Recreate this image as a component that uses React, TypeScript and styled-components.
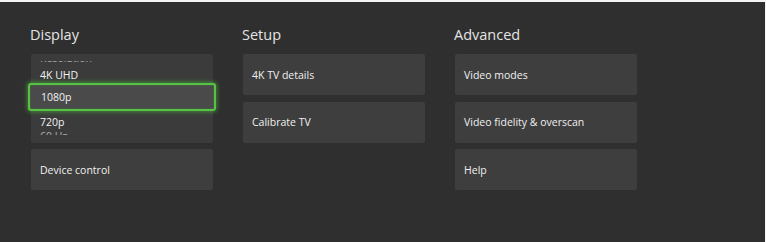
import React from 'react';
import styled, {createGlobalStyle} from 'styled-components';

const GlobalStyle = createGlobalStyle`
  html, body {
    margin: 0;
    padding: 0;
    background: #f4f4f4;
  }
  body {
    font-family: 'Open Sans', 'Noto Sans', sans-serif;
  }
`;

const columns = [
    {title: 'Display', items: ['Device control']},
    {title: 'Setup', items: ['4K TV details', 'Calibrate TV']},
    {title: 'Advanced', items: ['Video modes', 'Video fidelity & overscan', 'Help']},
];

const options = ['Resolution', '4K UHD', '1080p', '720p', '60 Hz'];

export default function App() {
    return (
        <>
            <GlobalStyle/>
            <Screen>
                {columns.map((col, i) => (
                    <Column key={col.title}>
                        <Heading>{col.title}</Heading>
                        {i === 0 && (
                            <Dropdown>
                                <OptionList>
                                    {options.map((o, idx) => (
                                        <Option
                                            key={o}
                                            $selected={o === '1080p'}
                                            $edge={idx === 0 ? 'top' : idx === options.length - 1 ? 'bottom' : undefined}
                                        >
                                            {o}
                                        </Option>
                                    ))}
                                </OptionList>
                            </Dropdown>
                        )}
                        {col.items.map(item => (
                            <Tile key={item}>{item}</Tile>
                        ))}
                    </Column>
                ))}
            </Screen>
        </>
    );
}

const Screen = styled.div`
  box-sizing: border-box;
  width: 765px;
  height: 240px;
  margin-top: 2px;
  background: #2f2f2f;
  padding: 21px 0 0 31px;
  display: grid;
  grid-template-columns: repeat(3, 182px);
  column-gap: 30px;
  align-items: start;
`;

const Column = styled.div`
  display: flex;
  flex-direction: column;
  gap: 6.5px;
`;

const Heading = styled.h2`
  margin: 0 0 0 -1px;
  height: 24.5px;
  font-size: 14.5px;
  font-weight: 400;
  line-height: 23px;
  color: #e4e4e4;
`;

const Tile = styled.div`
  box-sizing: border-box;
  height: 41px;
  padding: 0 9px;
  display: flex;
  align-items: center;
  background: #3e3e3e;
  border-radius: 2px;
  font-size: 10.5px;
  color: #f0f0f0;
`;

const Dropdown = styled.div`
  height: 88.5px;
  background: #3b3b3b;
  border-radius: 2px;
  position: relative;
`;

const OptionList = styled.div`
  display: flex;
  flex-direction: column;
  margin-top: -7.5px;
  clip-path: inset(14.5px -12px 10.5px -12px);
`;

const optionMargin = (p: { $selected?: boolean; $edge?: 'top' | 'bottom' }) => {
    if (p.$selected) return '-1.5px -3px 1.5px';
    if (p.$edge === 'top') return '2px 0 -2px';
    if (p.$edge === 'bottom') return '-5px 0 0';
    return '0';
};

const Option = styled.div<{ $selected?: boolean; $edge?: 'top' | 'bottom' }>`
  box-sizing: border-box;
  height: ${p => (p.$selected ? '28px' : '19px')};
  margin: ${optionMargin};
  padding: ${p => (p.$selected ? '0 9px 0 11px' : '0 9px')};
  display: flex;
  align-items: center;
  font-size: 10.5px;
  color: #f2f2f2;
  opacity: ${p => (p.$edge ? 0.6 : 1)};
  border-radius: 3px;
  background: ${p => (p.$selected ? '#4a4a4a' : 'transparent')};
  border: ${p => (p.$selected ? '2px solid #58c244' : 'none')};
  box-shadow: ${p => (p.$selected ? '0 0 4px 1px rgba(80, 200, 60, 0.55), inset 0 0 2px rgba(80, 200, 60, 0.4)' : 'none')};
`;
